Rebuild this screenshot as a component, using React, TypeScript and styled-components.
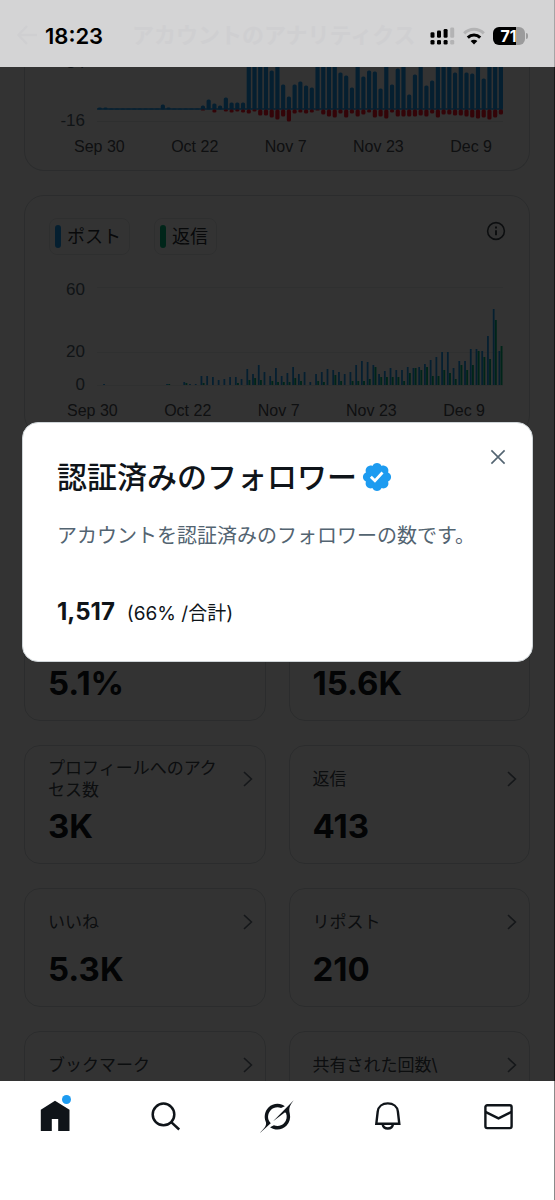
import React from "react";
import styled, { createGlobalStyle } from "styled-components";

const GlobalStyle = createGlobalStyle`
  *, *::before, *::after { box-sizing: border-box; }
  body {
    margin: 0;
    background: #fff;
    color: #0f1419;
    font-family: Inter, "Noto Sans CJK JP", sans-serif;
  }
  button { font: inherit; color: inherit; }
`;

const Screen = styled.div`
  display: flex;
  flex-direction: column;
  height: 100vh;
  min-height: 720px;
`;

/* ---------- status bar ---------- */

const StatusBar = styled.header`
  position: relative;
  flex: none;
  display: flex;
  align-items: center;
  justify-content: space-between;
  height: 67px;
  padding: 4px 26px 0 45px;
  background: #d4d4d5;
  border-right: 1px solid #a4a4a5;
  color: #000;
`;

const GhostTitle = styled.div`
  position: absolute;
  top: 19px;
  left: 16px;
  display: flex;
  align-items: center;
  gap: 94px;
  color: #cfcfd1;
  font-size: 22px;
  font-weight: 700;
  line-height: 32px;
  white-space: nowrap;
`;

const Clock = styled.time`
  position: relative;
  font-size: 22px;
  font-weight: 600;
  line-height: 28px;
`;

const StatusIcons = styled.div`
  position: relative;
  display: flex;
  align-items: center;
  gap: 8px;
`;

const Battery = styled.div`
  display: flex;
  align-items: center;
  gap: 1px;
`;

const BatteryBody = styled.div`
  width: 32px;
  height: 18px;
  padding-right: 1px;
  border-radius: 6px;
  background: linear-gradient(90deg, #000 71%, #9b9b9c 71%);
  color: #fff;
  font-size: 16px;
  font-weight: 700;
  line-height: 18px;
  text-align: center;
`;

const BatteryTip = styled.div`
  width: 2px;
  height: 6px;
  border-radius: 0 2px 2px 0;
  background: #9b9b9c;
`;

/* ---------- page behind the dialog ---------- */

const Stage = styled.div`
  position: relative;
  flex: 1;
  min-height: 0;
  overflow: hidden;
  border-right: 1px solid #161616;
`;

const Page = styled.main`
  display: flex;
  flex-direction: column;
  gap: 24px;
  padding: 0 24px;
`;

const Panel = styled.section<{ $cut?: boolean }>`
  padding: ${(p) => (p.$cut ? "0 24px 13px" : "22px 24px 13px")};
  border: 1px solid #d5dade;
  border-top-width: ${(p) => (p.$cut ? "0" : "1px")};
  border-radius: ${(p) => (p.$cut ? "0 0 20px 20px" : "20px")};
`;

const PanelHead = styled.div`
  display: flex;
  align-items: flex-start;
  justify-content: space-between;
  margin-bottom: 25px;
`;

const Legend = styled.div`
  display: flex;
  gap: 24px;
`;

const LegendItem = styled.span`
  display: flex;
  align-items: center;
  gap: 6px;
  height: 37px;
  padding: 0 8px 0 5px;
  border: 1px solid #e6eaec;
  border-radius: 8px;
  color: #2a3036;
  font-size: 18px;
  line-height: 24px;
`;

const Swatch = styled.i<{ $color: string }>`
  width: 6px;
  height: 23px;
  border-radius: 3px;
  background: ${(p) => p.$color};
`;

const IconButton = styled.button`
  display: grid;
  place-items: center;
  width: 26px;
  height: 26px;
  margin-right: -4px;
  padding: 0;
  border: 0;
  background: none;
`;

const Plot = styled.div<{ $cut?: boolean }>`
  display: flex;
  gap: 12px;
  height: ${(p) => (p.$cut ? "58px" : "115px")};
  padding-right: 2px;
`;

const Scale = styled.div<{ $cut?: boolean }>`
  flex: none;
  width: 36px;
  margin-top: ${(p) => (p.$cut ? "-14px" : "0")};
  color: #536471;
  font-family: "Liberation Sans", sans-serif;
  font-size: 17px;
  line-height: 20px;
  text-align: right;
`;

const Tick = styled.div<{ $gap: number }>`
  margin-top: ${(p) => p.$gap}px;
`;

const Graph = styled.svg`
  flex: 1;
  min-width: 0;
  display: block;
`;

const Dates = styled.div<{ $cut?: boolean }>`
  display: flex;
  justify-content: space-between;
  margin-top: ${(p) => (p.$cut ? "12px" : "6px")};
  padding: ${(p) => (p.$cut ? "0 13px 0 25px" : "0 20px 0 18px")};
  color: #4c5056;
  font-family: "Liberation Sans", sans-serif;
  font-size: 16px;
  line-height: 20px;
`;

const Tiles = styled.div`
  display: grid;
  grid-template-columns: 1fr 1fr;
  gap: 24px 23px;
  margin-top: 143px;
`;

const Tile = styled.button`
  display: flex;
  flex-direction: column;
  align-items: stretch;
  justify-content: flex-start;
  height: 119px;
  padding: 11px 11px 0 23px;
  border: 1px solid #d5dade;
  border-radius: 16px;
  background: none;
  text-align: left;
`;

const TileHead = styled.span`
  display: flex;
  align-items: center;
  justify-content: space-between;
  gap: 8px;
  height: 44px;
  color: #3e464e;
  font-size: 17px;
  line-height: 22px;
`;

const Chevron = styled.svg`
  flex: none;
  width: 12px;
  height: 18px;
`;

const TileValue = styled.strong`
  display: block;
  margin-top: 5px;
  font-size: 33px;
  font-weight: 700;
  line-height: 40px;
`;

/* ---------- dialog ---------- */

const Backdrop = styled.div`
  position: absolute;
  inset: 0;
  display: flex;
  align-items: center;
  padding: 0 21px 65px 22px;
  background: rgba(0, 0, 0, 0.8);
`;

const Dialog = styled.section`
  position: relative;
  flex: 1;
  padding: 34px 34px 31px;
  border: 1px solid #cfd5d8;
  border-radius: 16px;
  background: #fff;
`;

const DialogTitle = styled.h1`
  display: flex;
  align-items: center;
  gap: 5px;
  margin: 0;
  font-size: 30px;
  font-weight: 500;
  line-height: 40px;
`;

const Description = styled.p`
  margin: 25px 0 46px;
  color: #536471;
  font-size: 20px;
  line-height: 28px;
`;

const Figure = styled.p`
  display: flex;
  align-items: baseline;
  gap: 12px;
  margin: 0;
  font-size: 19px;
  line-height: 32px;
`;

const FigureValue = styled.strong`
  font-size: 24px;
  font-weight: 700;
`;

const CloseButton = styled.button`
  position: absolute;
  top: 18px;
  right: 18px;
  display: grid;
  place-items: center;
  width: 32px;
  height: 32px;
  padding: 0;
  border: 0;
  background: none;
`;

/* ---------- tab bar ---------- */

const TabBar = styled.nav`
  flex: none;
  display: grid;
  grid-template-columns: repeat(5, 1fr);
  height: 119px;
  padding-top: 20px;
  border-right: 1px solid #8a8a8a;
  background: #fff;
`;

const Tab = styled.a`
  position: relative;
  justify-self: center;
  width: 32px;
  height: 32px;
  color: #0f1419;
`;

const TabIcon = styled.svg`
  display: block;
  overflow: visible;
`;

const UnreadDot = styled.i`
  position: absolute;
  top: -6px;
  right: 0;
  width: 9px;
  height: 9px;
  border-radius: 50%;
  background: #1d9bf0;
`;

/* ---------- data ---------- */

const STEP = 5.73;

// Follower gains (up) and losses (down) per day, in plot units.
const gains = [
  2, 2, 1, 1, 1, 1, 1, 1, 1, 1, 1, 5, 2, 1, 1, 1, 1, 1, 4, 10, 6, 4, 12, 7, 7,
  7, 60, 60, 60, 60, 39, 60, 25, 13, 25, 28, 24, 22, 60, 60, 60, 60, 37, 34, 22,
  60, 33, 39, 38, 21, 60, 25, 41, 60, 15, 35, 60, 24, 29, 60, 60, 60, 37, 60,
  37, 36, 60, 31, 60, 60, 60,
];
const losses = [
  0, 0, 0, 0, 0, 0, 0, 0, 0, 0, 0, 0, 0, 0, 0, 0, 0, 0, 1, 0, 3, 0, 2, 3, 2, 3,
  4, 2, 6, 6, 8, 10, 7, 12, 4, 3, 4, 3, 1, 5, 7, 8, 4, 8, 4, 7, 5, 3, 8, 7, 9,
  3, 7, 7, 7, 7, 6, 7, 4, 8, 5, 5, 6, 6, 7, 8, 9, 8, 10, 8, 5,
];

// Posts and replies per day, in plot units (98 units = 60).
const posts = [
  0, 1, 0, 0, 0, 0, 0, 0, 0, 0, 0, 0, 1, 0, 0, 3, 1, 1, 9, 9, 8, 5, 6, 8, 8, 6,
  16, 11, 20, 13, 9, 17, 9, 12, 18, 11, 13, 3, 11, 13, 16, 15, 13, 11, 13, 20,
  24, 23, 20, 11, 14, 17, 15, 15, 18, 17, 18, 21, 25, 28, 33, 33, 17, 24, 24,
  36, 36, 34, 49, 76, 34,
];
const replies = [
  0, 0, 0, 0, 0, 0, 0, 0, 0, 0, 0, 0, 1, 0, 0, 2, 0, 0, 2, 0, 0, 0, 0, 0, 2, 0,
  5, 7, 5, 0, 4, 3, 3, 3, 7, 4, 0, 0, 4, 3, 0, 10, 4, 0, 4, 4, 4, 6, 18, 8, 8,
  8, 8, 4, 12, 17, 15, 18, 9, 9, 15, 12, 6, 20, 15, 20, 34, 28, 26, 65, 39,
];

const tiles = [
  { label: "エンゲージメント率", value: "5.1%" },
  { label: "エンゲージメント", value: "15.6K" },
  { label: "プロフィールへのアクセス数", value: "3K" },
  { label: "返信", value: "413" },
  { label: "いいね", value: "5.3K" },
  { label: "リポスト", value: "210" },
  { label: "ブックマーク", value: "" },
  { label: "共有された回数\\", value: "" },
];

const dates = ["Sep 30", "Oct 22", "Nov 7", "Nov 23", "Dec 9"];

const DateAxis = ({ cut }: { cut?: boolean }) => (
  <Dates $cut={cut}>
    {dates.map((d) => (
      <span key={d}>{d}</span>
    ))}
  </Dates>
);

const FollowersGraph = () => (
  <Graph height="58" viewBox="0 0 406 58" preserveAspectRatio="none" aria-hidden="true">
    <path d="M0 54.5H406" stroke="#e4e9ec" />
    <path d="M0 42H406" stroke="#1d9bf0" strokeWidth="1.4" />
    {gains.map((g, i) => (
      <rect key={i} x={0.7 + i * STEP} y={42.5 - g} width="4.2" height={g} rx="1.6" fill="#1d9bf0" />
    ))}
    {losses.map((l, i) =>
      l ? <rect key={i} x={0.7 + i * STEP} y="42.5" width="4.2" height={l} rx="1.6" fill="#ff1428" /> : null
    )}
  </Graph>
);

const PostsGraph = () => (
  <Graph height="115" viewBox="0 0 406 115" preserveAspectRatio="none" aria-hidden="true">
    <path d="M0 7.5H406M0 72.5H406M0 105.5H406" stroke="#eaeef0" />
    {posts.map((n, i) => (
      <rect key={i} x={0.4 + i * STEP} y={105 - n} width="1.8" height={n} fill="#1d9bf0" />
    ))}
    {replies.map((n, i) => (
      <rect key={i} x={2.5 + i * STEP} y={105 - n} width="1.9" height={n} fill="#00ba7c" />
    ))}
  </Graph>
);

export default function App() {
  return (
    <>
      <GlobalStyle />
      <Screen>
        <StatusBar>
          <GhostTitle>
            <svg width="22" height="22" viewBox="0 0 22 22" fill="none" stroke="currentColor" strokeWidth="2.4">
              <path d="M21 11H3M11 2L2.5 11L11 20" />
            </svg>
            アカウントのアナリティクス
          </GhostTitle>
          <Clock>18:23</Clock>
          <StatusIcons>
            <svg width="25" height="18" viewBox="0 0 25 18" aria-label="signal">
              <rect x="0.5" y="5.2" width="4" height="5.6" rx="1.3" />
              <rect x="7" y="3.6" width="4" height="7.2" rx="1.3" />
              <rect x="13.6" y="2" width="4" height="8.8" rx="1.3" />
              <rect x="20.2" y="0.4" width="4" height="10.4" rx="1.3" fill="#b3b3b4" />
              <rect x="0.5" y="13" width="4" height="4.6" rx="1.3" />
              <rect x="7" y="13" width="4" height="4.6" rx="1.3" />
              <rect x="13.6" y="13" width="4" height="4.6" rx="1.3" />
              <rect x="20.2" y="13" width="4" height="4.6" rx="1.3" fill="#b3b3b4" />
            </svg>
            <svg width="22" height="18" viewBox="0 0 22 18" fill="none" strokeWidth="3" aria-label="wifi">
              <path d="M1.2 6.4a13.8 13.8 0 0 1 19.6 0" stroke="#b3b3b4" />
              <path d="M4.8 10.6a8.8 8.8 0 0 1 12.4 0" stroke="#000" />
              <path d="M11 17.4L7.6 14a4.9 4.9 0 0 1 6.8 0z" fill="#000" />
            </svg>
            <Battery>
              <BatteryBody>71</BatteryBody>
              <BatteryTip />
            </Battery>
          </StatusIcons>
        </StatusBar>

        <Stage>
          <Page>
            <Panel $cut>
              <Plot $cut>
                <Scale $cut>
                  <Tick $gap={0}>34</Tick>
                  <Tick $gap={38}>-16</Tick>
                </Scale>
                <FollowersGraph />
              </Plot>
              <DateAxis cut />
            </Panel>

            <Panel>
              <PanelHead>
                <Legend>
                  <LegendItem>
                    <Swatch $color="#1d9bf0" />
                    ポスト
                  </LegendItem>
                  <LegendItem>
                    <Swatch $color="#00ba7c" />
                    返信
                  </LegendItem>
                </Legend>
                <IconButton type="button" aria-label="詳細">
                  <svg width="20" height="20" viewBox="0 0 20 20" fill="none" stroke="#3e464e" strokeWidth="1.6">
                    <circle cx="10" cy="10" r="8.4" />
                    <path d="M10 9.2v5M10 5.6v2" strokeWidth="2" />
                  </svg>
                </IconButton>
              </PanelHead>
              <Plot>
                <Scale>
                  <Tick $gap={0}>60</Tick>
                  <Tick $gap={42}>20</Tick>
                  <Tick $gap={13}>0</Tick>
                </Scale>
                <PostsGraph />
              </Plot>
              <DateAxis />
            </Panel>

            <Tiles>
              {tiles.map((t) => (
                <Tile type="button" key={t.label}>
                  <TileHead>
                    {t.label}
                    <Chevron viewBox="0 0 12 18" fill="none" stroke="#6b7580" strokeWidth="1.7">
                      <path d="M2 2l7.4 7L2 16" />
                    </Chevron>
                  </TileHead>
                  <TileValue>{t.value}</TileValue>
                </Tile>
              ))}
            </Tiles>
          </Page>

          <Backdrop>
            <Dialog role="dialog" aria-modal="true" aria-labelledby="dialog-title">
              <CloseButton type="button" aria-label="閉じる">
                <svg width="16" height="16" viewBox="0 0 16 16" fill="none" stroke="#536471" strokeWidth="1.6">
                  <path d="M1.4 1.4l13.2 13.2M14.6 1.4L1.4 14.6" />
                </svg>
              </CloseButton>
              <DialogTitle id="dialog-title">
                認証済みのフォロワー
                <svg width="30" height="30" viewBox="1 1 20 20" fill="#1d9bf0" aria-label="認証済み">
                  <path d="M20.396 11c-.018-.646-.215-1.275-.57-1.816-.354-.54-.852-.972-1.438-1.246.223-.607.27-1.264.14-1.897-.131-.634-.437-1.218-.882-1.687-.47-.445-1.053-.75-1.687-.882-.633-.13-1.29-.083-1.897.14-.273-.587-.704-1.086-1.245-1.44S11.647 1.62 11 1.604c-.646.017-1.273.213-1.813.568s-.969.854-1.24 1.44c-.608-.223-1.267-.272-1.902-.14-.635.13-1.22.436-1.69.882-.445.47-.749 1.055-.878 1.688-.13.633-.08 1.29.144 1.896-.587.274-1.087.705-1.443 1.245-.356.54-.555 1.17-.574 1.817.02.647.218 1.276.574 1.817.356.54.856.972 1.443 1.245-.224.606-.274 1.263-.144 1.896.13.634.433 1.218.877 1.688.47.443 1.054.747 1.687.878.633.132 1.29.084 1.897-.136.274.586.705 1.084 1.246 1.439.54.354 1.17.551 1.816.569.647-.016 1.276-.213 1.817-.567s.972-.854 1.245-1.44c.604.239 1.266.296 1.903.164.636-.132 1.22-.447 1.68-.907.46-.46.776-1.044.908-1.681s.075-1.299-.165-1.903c.586-.274 1.084-.705 1.439-1.246.354-.54.551-1.17.569-1.816zM9.662 14.85l-3.429-3.428 1.293-1.302 2.072 2.072 4.4-4.794 1.347 1.246z" />
                </svg>
              </DialogTitle>
              <Description>アカウントを認証済みのフォロワーの数です。</Description>
              <Figure>
                <FigureValue>1,517</FigureValue>
                <span>(66% /合計)</span>
              </Figure>
            </Dialog>
          </Backdrop>
        </Stage>

        <TabBar>
          <Tab href="#home" aria-label="ホーム">
            <TabIcon width="32" height="32" viewBox="0 0 32 32" fill="currentColor">
              <path d="M16 -0.3L30.5 8.8V30H19.2V18H12.8V30H1.8V8.8z" />
            </TabIcon>
            <UnreadDot />
          </Tab>
          <Tab href="#search" aria-label="検索">
            <TabIcon width="32" height="32" viewBox="0 0 32 32" fill="none" stroke="currentColor" strokeWidth="2.5">
              <circle cx="13.5" cy="13.4" r="10.8" />
              <path d="M21.2 21.1l8 7.4" />
            </TabIcon>
          </Tab>
          <Tab href="#grok" aria-label="Grok">
            <TabIcon width="34" height="33" viewBox="1 1 33 32" fill="currentColor">
              <path d="M12.745 20.54l10.97-8.19c.539-.4 1.307-.244 1.564.38 1.349 3.288.746 7.241-1.938 9.955-2.683 2.714-6.417 3.31-9.83 1.954l-3.728 1.745c5.347 3.697 11.84 2.782 15.898-1.324 3.219-3.255 4.216-7.692 3.284-11.693l.008.009c-1.351-5.878.332-8.227 3.782-13.031L33 0l-4.54 4.59v-.014L12.743 20.544m-2.263 1.987c-3.837-3.707-3.175-9.446.1-12.755 2.42-2.449 6.388-3.448 9.852-1.979l3.72-1.737c-.67-.49-1.53-1.017-2.515-1.387-4.455-1.854-9.789-.931-13.41 2.728-3.483 3.523-4.579 8.94-2.697 13.561 1.405 3.454-.899 5.898-3.22 8.364C1.49 30.2.666 31.074 0 32l10.478-9.466" />
            </TabIcon>
          </Tab>
          <Tab href="#notifications" aria-label="通知">
            <TabIcon width="32" height="32" viewBox="0 0 32 32" fill="none" stroke="currentColor" strokeWidth="2.4">
              <path d="M4.3 22.8L5.7 10.6C6.3 5.6 10.4 2.4 15.8 2.4s9.5 3.2 10.1 8.2l1.4 12.2z" />
              <path d="M10.6 23.2a5.3 5.3 0 0 0 10.4 0" />
            </TabIcon>
          </Tab>
          <Tab href="#messages" aria-label="メッセージ">
            <TabIcon width="32" height="32" viewBox="0 0 32 32" fill="none" stroke="currentColor" strokeWidth="2.4">
              <rect x="2.4" y="4.3" width="26.2" height="22.8" rx="1.8" />
              <path d="M2.4 10.9l13.1 6.4 13.1-6.4" />
            </TabIcon>
          </Tab>
        </TabBar>
      </Screen>
    </>
  );
}
